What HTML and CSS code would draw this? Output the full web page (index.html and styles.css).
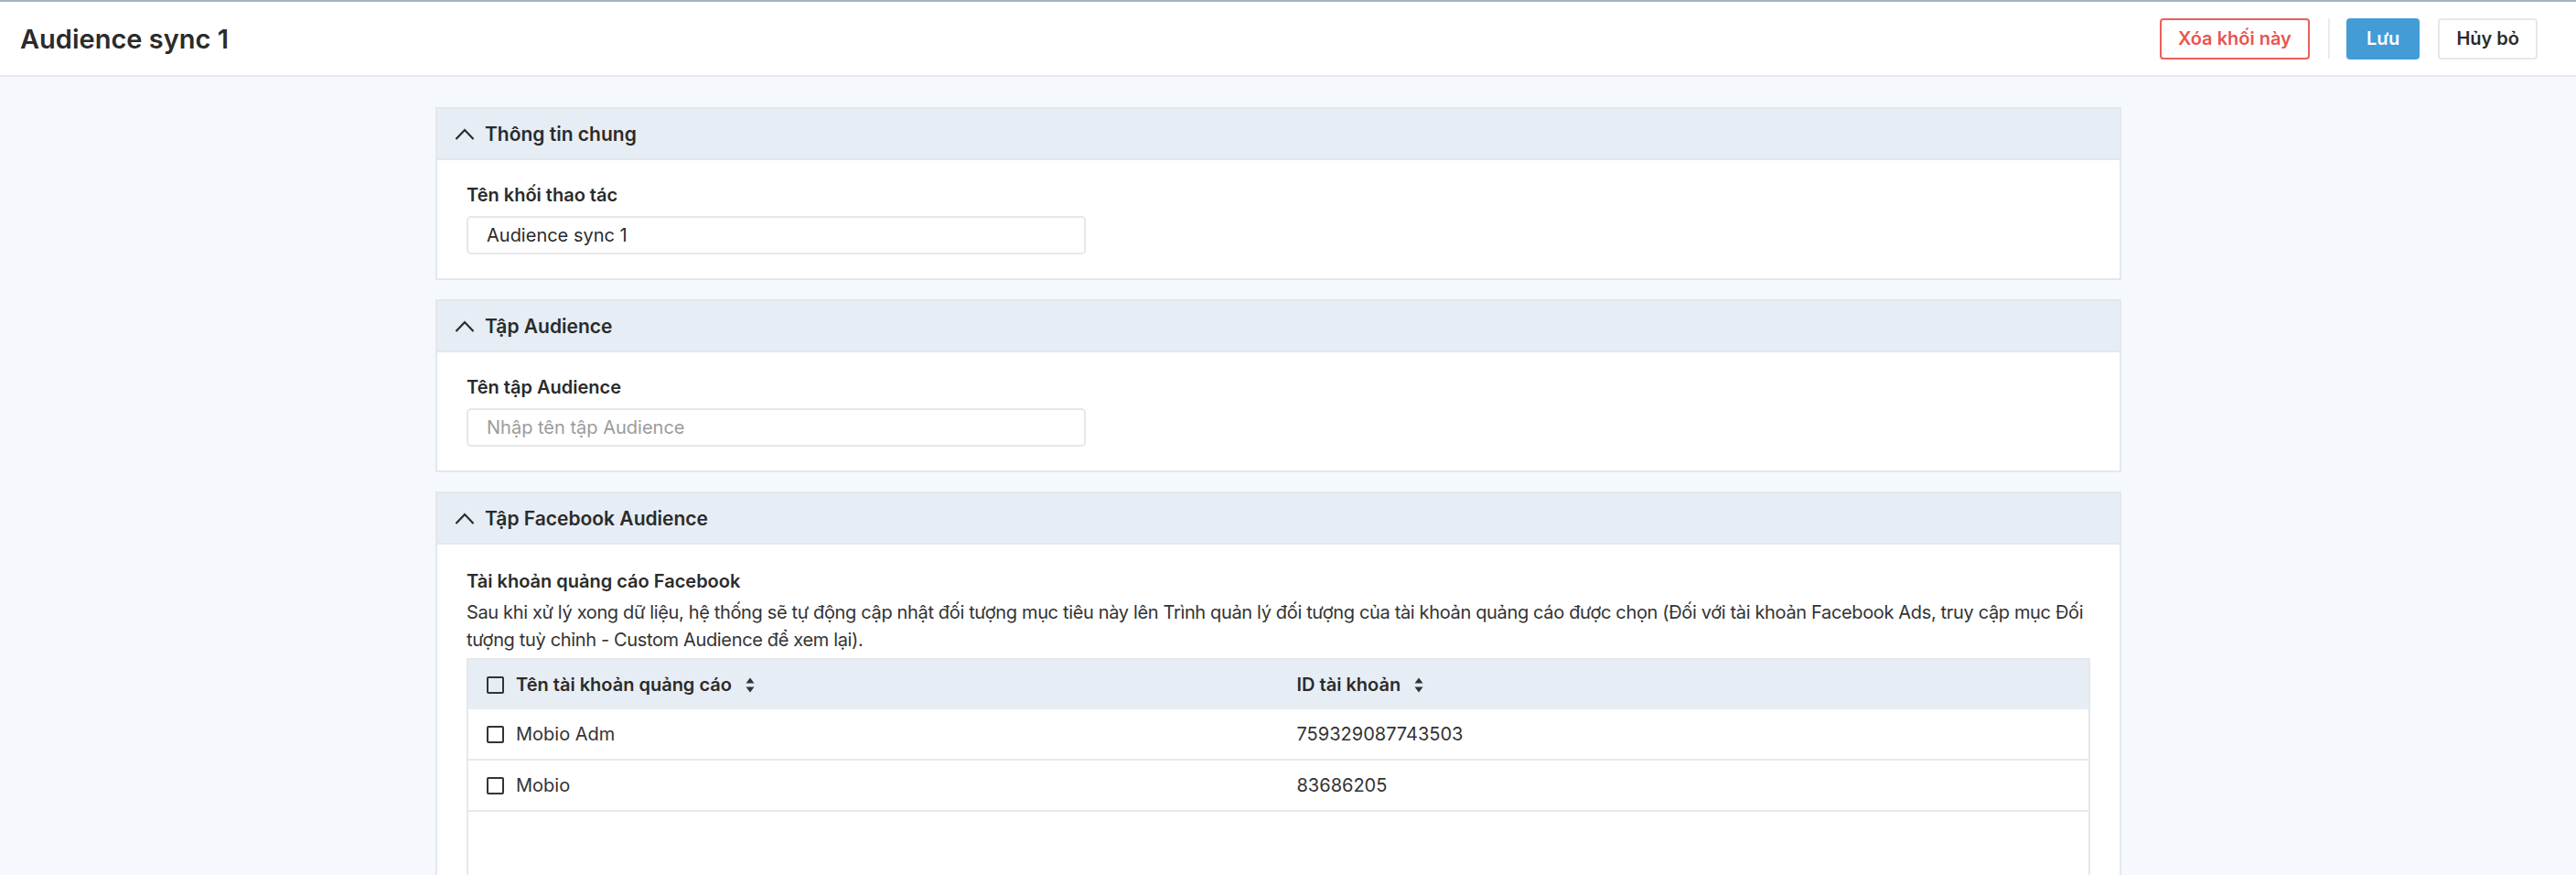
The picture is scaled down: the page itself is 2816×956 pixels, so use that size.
FILE: index.html
```html
<!DOCTYPE html>
<html lang="vi">
<head>
<meta charset="utf-8">
<title>Audience sync 1</title>
<link rel="stylesheet" href="styles.css">
</head>
<body>
<header class="topbar">
  <h1 class="page-title">Audience sync 1</h1>
  <div class="actions">
    <button class="btn btn-danger">Xóa khối này</button>
    <span class="divider"></span>
    <button class="btn btn-primary">Lưu</button>
    <button class="btn btn-default">Hủy bỏ</button>
  </div>
</header>

<main class="content">
  <div class="column">
    <section class="card">
      <div class="card-header">
        <svg class="chevron" viewBox="0 0 22 13" width="22" height="13"><path d="M1.5 12 L11 2 L20.5 12" fill="none" stroke="#2b2b2b" stroke-width="2.2"/></svg>
        <span class="card-title">Thông tin chung</span>
      </div>
      <div class="card-body">
        <label class="field-label">Tên khối thao tác</label>
        <div class="input">Audience sync 1</div>
      </div>
    </section>

    <section class="card">
      <div class="card-header">
        <svg class="chevron" viewBox="0 0 22 13" width="22" height="13"><path d="M1.5 12 L11 2 L20.5 12" fill="none" stroke="#2b2b2b" stroke-width="2.2"/></svg>
        <span class="card-title">Tập Audience</span>
      </div>
      <div class="card-body">
        <label class="field-label">Tên tập Audience</label>
        <div class="input placeholder">Nhập tên tập Audience</div>
      </div>
    </section>

    <section class="card">
      <div class="card-header">
        <svg class="chevron" viewBox="0 0 22 13" width="22" height="13"><path d="M1.5 12 L11 2 L20.5 12" fill="none" stroke="#2b2b2b" stroke-width="2.2"/></svg>
        <span class="card-title">Tập Facebook Audience</span>
      </div>
      <div class="card-body fb-body">
        <div class="field-label">Tài khoản quảng cáo Facebook</div>
        <p class="desc">Sau khi xử lý xong dữ liệu, hệ thống sẽ tự động cập nhật đối tượng mục tiêu này lên Trình quản lý đối tượng của tài khoản quảng cáo được chọn (Đối với tài khoản Facebook Ads, truy cập mục Đối<br>tượng tuỳ chỉnh - Custom Audience để xem lại).</p>
        <div class="table">
          <div class="tr th">
            <div class="td"><span class="checkbox"></span><span>Tên tài khoản quảng cáo</span><svg class="sort" viewBox="0 0 10 17" width="10" height="17"><path d="M5 0.5 L9.5 6.5 H0.5Z M5 16.5 L9.5 10.5 H0.5Z" fill="#333"/></svg></div>
            <div class="td"><span>ID tài khoản</span><svg class="sort" viewBox="0 0 10 17" width="10" height="17"><path d="M5 0.5 L9.5 6.5 H0.5Z M5 16.5 L9.5 10.5 H0.5Z" fill="#333"/></svg></div>
          </div>
          <div class="tr">
            <div class="td"><span class="checkbox"></span><span>Mobio Adm</span></div>
            <div class="td">759329087743503</div>
          </div>
          <div class="tr">
            <div class="td"><span class="checkbox"></span><span>Mobio</span></div>
            <div class="td">83686205</div>
          </div>
          <div class="table-fill"></div>
        </div>
      </div>
    </section>
  </div>
</main>
</body>
</html>
```

FILE: styles.css
```css
* { box-sizing: border-box; }
html, body { margin: 0; padding: 0; }
body {
  background: #f5f9fd;
  font-family: "Inter", "Noto Sans", sans-serif;
  color: #2d2d2d;
}

.topbar {
  height: 84px;
  background: #fff;
  border-top: 2px solid #a5b1c4;
  border-bottom: 2px solid #e6e8ee;
  display: flex;
  align-items: center;
  justify-content: space-between;
  padding: 0 42px 0 22px;
}
.page-title {
  margin: 0;
  font-size: 29px;
  font-weight: 600;
  color: #2b2b2b;
}
.actions {
  display: flex;
  align-items: center;
}
.btn {
  height: 45px;
  padding: 0 18px;
  border-radius: 4px;
  border: 2px solid #e6e8ee;
  background: #fff;
  font-family: inherit;
  font-size: 20px;
  font-weight: 600;
  color: #2b2b2b;
  line-height: 1;
}
.btn-danger {
  border-color: #e9605a;
  color: #e8564f;
}
.btn-primary {
  background: #439cd6;
  border-color: #439cd6;
  color: #fff;
  padding: 0 20px;
}
.btn-default { margin-left: 20px; }
.divider {
  width: 2px;
  height: 44px;
  background: #e8eaef;
  margin: 0 18px 0 20px;
}

.content {
  padding: 33px 0 0 476px;
}
.column {
  width: 1843px;
  display: flex;
  flex-direction: column;
  gap: 21px;
}
.card {
  background: #fff;
  border: 2px solid #e4e7ed;
}
.card-header {
  height: 56px;
  background: #e7edf4;
  border-bottom: 2px solid #e4e7ed;
  display: flex;
  align-items: center;
  padding-left: 19px;
}
.chevron { display: block; margin-right: 11px; }
.card-title {
  font-size: 21px;
  font-weight: 600;
  color: #2b2b2b;
}
.card-body {
  padding: 26px 32px 26px 32px;
}
.field-label {
  display: block;
  font-size: 20px;
  line-height: 24px;
  font-weight: 600;
  color: #2b2b2b;
  margin-bottom: 11px;
}
.input {
  width: 677px;
  height: 42px;
  border: 2px solid #e4e7ed;
  border-radius: 5px;
  padding: 0 20px;
  display: flex;
  align-items: center;
  font-size: 20px;
  color: #2b2b2b;
}
.input.placeholder { color: #9b9b9b; }

.fb-body { padding-top: 28px; padding-bottom: 0; }
.fb-body .field-label { margin-bottom: 7px; }
.desc {
  margin: 0 0 5px 0;
  font-size: 20px;
  line-height: 30px;
  color: #333;
  white-space: nowrap;
  letter-spacing: -0.35px;
}

.table {
  border: 2px solid #e6e8ee;
  border-bottom: none;
  font-size: 20px;
  color: #333;
}
.tr {
  display: grid;
  grid-template-columns: 1fr 1fr;
  height: 56px;
  border-bottom: 2px solid #e6e8ee;
}
.tr.th {
  height: 54px;
  background: #e7edf4;
  border-bottom: none;
  font-weight: 600;
  color: #2b2b2b;
}
.td {
  display: flex;
  align-items: center;
  padding-left: 20px;
}
.checkbox {
  width: 19px;
  height: 19px;
  border: 2px solid #333;
  border-radius: 2px;
  margin-right: 13px;
  flex: none;
}
.sort { display: block; margin-left: 15px; }
.table-fill { height: 260px; }
```
